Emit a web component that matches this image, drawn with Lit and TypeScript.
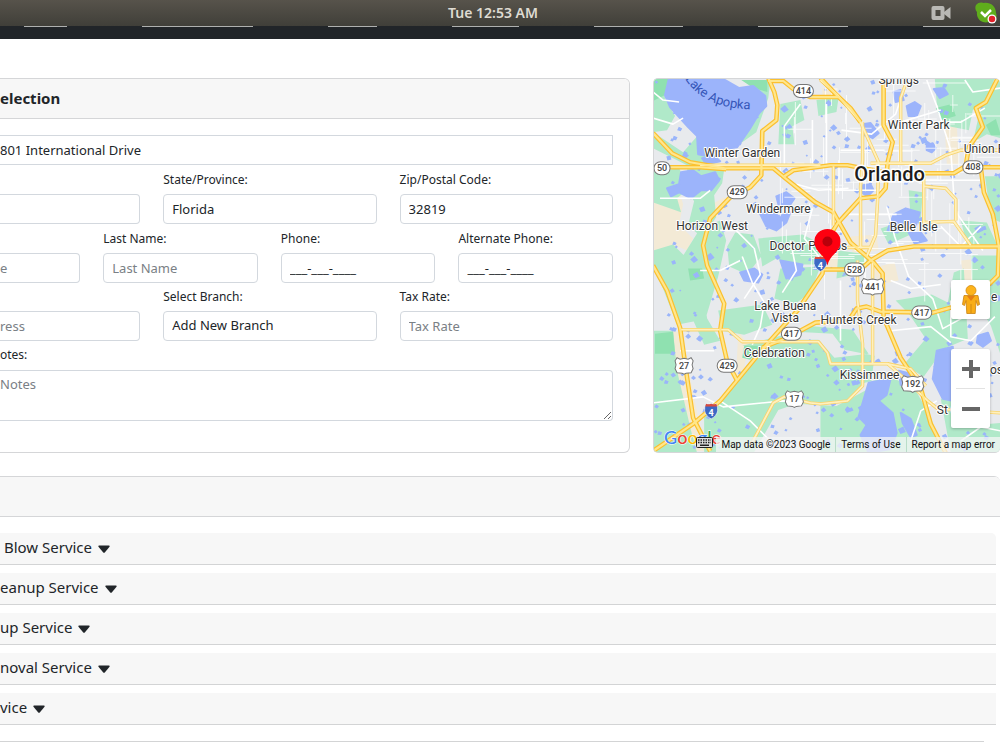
import { LitElement, html, svg, css } from "lit";
import { customElement, property } from "lit/decorators.js";

type Road = { d: string; major?: boolean };

const GREEN = [
  "M653 78h22l-10 20 10 18-8 14-14 2z",
  "M653 132l30 20 14-16 4 18 20 0-10 14-22 -2-36-18z",
  "M752 80h18l-2 18 -12 34-14 10-14 6 20-34z",
  "M780 104l20-4 4 20-12 6 2 18-16 0z",
  "M816 100l22-2-2 14-18 4z",
  "M688 165l36 4-2 14-8 12 2 22-14 20-14-12 6-24-10-16z",
  "M653 172l26-4 10 20-12 10 4 14-28-10z",
  "M700 228l20-8 6 20-8 36-12 40 14 24-16 4-18-40-6-44z",
  "M653 250l20-6 14 14 12 0 8 60-30 6-14-36-10-20z",
  "M735 232l18 2 8 22-14 18-18 -8-2-20z",
  "M758 238l44-4 20 10-8 20-24 0-14-6-14 8z",
  "M780 268l40-2-10 26-16 12-20-6z",
  "M653 330l20 0 4 40 14 60 6 22-44 0z",
  "M718 310l44-6 10 20-28 10-22-4z",
  "M742 345l22 2-44 54-16 8 0 42 50 0 24-42 18 -6 40 2 34-18 4-32-30-6-12-16-36-2z",
  "M806 325l46 4 16 24-34 4-16-18-22 0z",
  "M820 404l26-4 18-18 26-6 24 12 16 28 12 36-122 0z",
  "M895 300l36-6 16 8 6-30 10-4 4 70-24 10-20 28-20-12 22-26-16-24z",
  "M940 398l12 0 0 28 48-4 0 30-50 0z",
  "M934 78l60 0-10 24-12 8-4 20-20 -4-12-22z",
  "M984 88l16-10 0 60-14-4-14 8z",
  "M984 176l16 0 0 46-10-4z",
  "M960 220l26 2 10 22-30 0z",
  "M970 255l30 0 0 100-10-30-18-30z",
  "M838 250l30 4-6 18-26 6z",
  "M880 228l24-8 6 14-22 10z",
  "M908 190l14 2 -2 28-10-2z",
];
const DARK_GREEN = [
  "M653 79h16l-4 16-12 6z",
  "M741 80h26l0 12-14-4z",
  "M655 333l18-2 2 22-20 0z",
  "M688 268l14 0 2 10-14 2z",
  "M744 345l18 0-12 14-8-2z",
  "M935 108l16-4 4 12-14 4z",
  "M985 125l10-6 5 16-10 0z",
  "M812 242l8-2 2 10-10 2z",
];
const SAND = [
  "M653 170l22 6 8 28-4 20 14 14-6 12-14-6-12 12-8 0z",
  "M673 330l8 2 12 60 12 58-10 0-18-60z",
  "M710 205l14-8 4 10-14 10z",
  "M738 330l10 14-6 36-6-6z",
  "M850 236l26-2 2 16-26 2z",
  "M822 252l18-2 8 20-24 2z",
  "M944 128l12-4 2 40-12 0z",
  "M870 268l24-6 4 18-18 4z",
  "M822 88l14 0-2 8-12 0z",
  "M960 260l20-2 4 22-20 4z",
];
const WATER = [
  "M669 78L665 95l5 12 9 10 9 10 9 9 1 18 10 2 14-7 15-2 13-19 9-15 7-7-1-10-12-10-14 2-14-8z",
  "M681 172l12-2 8 6 14-4 4 8-8 10-10 0-10 8-12-6-8 4-4-8 12-4z",
  "M702 158l12-2 6 5-14 3z",
  "M760 214l10-4 8 6 12-4-4 10-10 8-10-4z",
  "M776 196l10-4 8 6-4 6-12 0z",
  "M740 272l14-4 8 6-4 8-14-2z",
  "M868 382l22-4-4 16-8 6 14 12 4 20-6 16-22 4-8-18 6-10-8-8z",
  "M936 350l16-4 0 54-10-2-10-20z",
  "M977 335l10-3 3 8-8 6-6-4z",
  "M862 185l8-1 3 6-6 6-6-4z",
  "M893 214l12-6 14 4-4 14-10-2-8 8-10-2z",
  "M862 124l8-1 8 10-6 5-8-4z",
  "M906 106l8-4 6 4-4 10-8 0z",
  "M933 89l10-1 4 6-8 4z",
  "M893 92l7-2 3 10-8 2z",
  "M908 232l12 0 6 8-12 3z",
  "M926 145l6-2 3 5-4 4-5-2z",
  "M780 260l22 4-2 10-14 4z",
  "M898 370l16 4-2 14-12-4z",
  "M900 412l10 6 6 16-6 2-8-14z",
];

const WHITE_STREETS = [
  "M653 92l10 8 16 2",
  "M653 118l20 6 10-6",
  "M660 198h40l10-8",
  "M720 230l16 0 18 18 6 26-16 24",
  "M742 256l10 26 12 20-4 24-8 18",
  "M790 240l6 30-14 22",
  "M812 208l-8 30 16 20",
  "M796 184l22 6 30-2",
  "M830 190h54M846 214h50M886 206l8 30 14 40 24 22 10 30 22-12",
  "M926 80l10 26 14 44 4 60 28 40",
  "M905 84l-10 30-24 20-30-4",
  "M900 122h60l24-14",
  "M840 150h44M900 180h80M940 226l20 20 20-20",
  "M950 300l0 36 20 4 24-24",
  "M653 402l50-6 20 10 60-6 30 2",
  "M720 400l30 20 30 30",
  "M840 280v60M890 280l20 8 30-4",
  "M890 330l40-4 20 16",
  "M680 350h34M700 270h20l20-10",
  "M940 110l-40 12M964 80l8 12 28-4",
  "M800 104l-16 22 0 38M812 120v46M826 104v60",
  "M910 440l10-30 16-10M960 440l20-14 20 4",
];

const ROADS: Road[] = [
  { d: "M700 165H820" },
  { d: "M820 80L837 95L860 122L878 162L877 200L875 235L866 256" },
  { d: "M905 84L900 98V162" },
  { d: "M870 163H930L945 155L960 150H1000" },
  { d: "M923 175V222L953 221L970 245" },
  { d: "M923 186L945 188L955 199V220" },
  { d: "M833 166V225" },
  { d: "M862 122V160L860 186V248" },
  { d: "M820 247H870" },
  { d: "M872 262V363" },
  { d: "M857 260V300L862 343V385L847 400L820 403L810 402L784 396L773 402L750 445" },
  { d: "M680 329H728L742 341H818L827 352L830 363H887L903 377L927 400L937 408L1000 412" },
  { d: "M887 363L910 368L925 385" },
  { d: "M768 78L774 92L777 105L776 120L762 131L761 175L750 187L730 197L710 218L703 245L707 265L724 303L720 330L727 361L737 380", major: true },
  { d: "M768 81H783L793 89L810 97H838", major: true },
  { d: "M820 78L837 96L850 108L860 122", major: true },
  { d: "M653 133L672 153L690 162L725 168L773 168L785 178L815 202L833 212L850 242L873 262L882 273L883 317L900 357L920 387L930 423L945 452", major: true },
  { d: "M653 167H700L726 169", major: true },
  { d: "M784 176L793 170L830 165H847L862 168L890 173H953L963 167H1000", major: true },
  { d: "M883 78V125L892 142L887 162L885 188L878 196L860 198L837 223L824 244L822 273L797 310L767 343L720 400L693 423L653 450", major: true },
  { d: "M997 78L985 102L975 108L982 127L968 147L965 165", major: true },
  { d: "M980 168L983 192L992 214L998 246L997 275L988 284", major: true },
  { d: "M822 269H860L870 260L887 250L913 246H1000", major: true },
  { d: "M653 265L667 290L680 327L687 377L693 417L710 450", major: true },
  { d: "M762 347L782 339L800 330L815 322L848 320L856 308L866 306L880 311L932 312L950 307L985 298", major: true },
];

/* Small deterministic generator so that the ponds keep their places between renders. */
function series(seed: number) {
  let s = seed;
  return () => ((s = (s * 16807) % 2147483647), s / 2147483647);
}
const rnd = series(4271);
const PONDS = Array.from({ length: 430 }, () => {
  const x = 653 + rnd() * 347;
  const y = 80 + rnd() * 368;
  const a = 1 + rnd() * rnd() * 5;
  const b = 1 + rnd() * 3;
  return `M${x.toFixed(1)} ${y.toFixed(1)}l${a.toFixed(1)} ${(-b).toFixed(1)}l${b.toFixed(1)} ${a.toFixed(1)}l${(-a).toFixed(1)} ${(b * 0.8).toFixed(1)}z`;
}).join("");
const BLOCKS = Array.from({ length: 130 }, () => {
  const x = Math.round(780 + rnd() * 200);
  const y = Math.round(82 + rnd() * 190);
  const l = Math.round(8 + rnd() * 36);
  return rnd() > 0.5 ? `M${x} ${y}h${l}` : `M${x} ${y}v${l}`;
}).join("");

const PLACES: [string, number, number][] = [
  ["Springs", 898, 84], ["Winter Park", 918, 129], ["Winter Garden", 742, 157],
  ["Windermere", 778, 213], ["Horizon West", 712, 230],
  ["Belle Isle", 913, 231], ["Doctor Phillips", 808, 250], ["Lake Buena", 785, 309], ["Vista", 785, 321],
  ["Hunters Creek", 858, 323], ["Celebration", 774, 356], ["Kissimmee", 869, 378],
];
const SHIELDS: [string, number, number, boolean][] = [
  ["414", 803, 91, false], ["50", 662, 168, false], ["429", 737, 192, false], ["408", 972, 167, false],
  ["528", 854, 269, false], ["417", 921, 312, false], ["417", 791, 333, false], ["429", 727, 365, false],
  ["441", 872, 286, true], ["27", 684, 365, true], ["17", 794, 398, true], ["192", 912, 383, true],
];

@customElement("map-panel")
export class MapPanel extends LitElement {
  static styles = css`
    :host { display: block; position: relative; overflow: hidden; border: 1px solid #d5d6d8; border-right: 0; border-radius: 5px; box-sizing: border-box; background: #e8eaed; font-family: Roboto, sans-serif; }
    .map { display: block; width: 100%; height: 0; min-height: 100%; }
    .place { font: 12px Roboto, sans-serif; fill: #333; stroke: #fff; stroke-width: 2px; paint-order: stroke; stroke-linejoin: round; }
    .city { font-size: 20px; font-weight: 500; fill: #1c1c1c; stroke-width: 3px; }
    .lake { font: 13px Roboto, sans-serif; fill: #3556b8; }
    .num { font: 500 9px Roboto, sans-serif; fill: #444; }
    .inum { font: bold 9px Roboto, sans-serif; fill: #fff; }
    .logo { font: 500 18px Lato, sans-serif; stroke: #fff; stroke-width: 1px; paint-order: stroke; }
    .controls { position: absolute; right: 10px; bottom: 24px; display: grid; gap: 30px; }
    .box { background: #fff; border-radius: 2px; box-shadow: 0 1px 3px rgba(0, 0, 0, 0.25); display: grid; width: 39px; }
    button { border: 0; background: none; padding: 0; height: 39px; display: grid; place-items: center; cursor: pointer; }
    .rule { height: 1px; margin: 0 5px; background: #e2e2e2; }
    .legal { position: absolute; right: 0; bottom: 0; display: flex; align-items: center; font-size: 10px; line-height: 15px; color: #111; }
    .legal > * { padding: 0 5px; background: rgba(245, 245, 245, 0.75); color: inherit; text-decoration: none; white-space: nowrap; height: 15px; }
    .legal > * + * { border-left: 1px solid #b9ddc8; }
    .legal > .keys { padding: 0 3px; background: none; }
    .legal > .data { border: 0; }
  `;

  render() {
    return html`
      <svg class="map" viewBox="654 79 346 372" preserveAspectRatio="xMinYMin slice" role="img" aria-label="Map">
        <rect x="600" y="60" width="800" height="420" fill="#e8eaed"></rect>
        <path d=${SAND.join("")} fill="#f3ead6"></path>
        <path d=${GREEN.join("")} fill="#b0e9c9"></path>
        <path d=${DARK_GREEN.join("")} fill="#8fe1b0"></path>
        <path d=${PONDS} fill="#9ab5fa"></path>
        <path d=${WATER.join("")} fill="#9cb4fb" stroke="#9cb4fb" stroke-width="2" stroke-linejoin="round"></path>
        <path d=${BLOCKS} fill="none" stroke="#fff" stroke-width="1" opacity=".75"></path>
        <path d=${WHITE_STREETS.join("")} fill="none" stroke="#fff" stroke-width="1.6" stroke-linejoin="round"></path>
        <g fill="none" stroke-linejoin="round">
          ${ROADS.map((r) => svg`<path d=${r.d} stroke=${r.major ? "#fbc02f" : "#f8d36b"} stroke-width=${r.major ? 4.6 : 3.4}></path>`)}
          ${ROADS.map((r) => svg`<path d=${r.d} stroke=${r.major ? "#ffe68c" : "#fff0bd"} stroke-width=${r.major ? 2.2 : 1.8}></path>`)}
        </g>
        <path id="lake-line" d="M685 79Q706 111 758 109" fill="none"></path>
        <text class="lake"><textPath href="#lake-line">Lake Apopka</textPath></text>
        <g text-anchor="middle">
          ${PLACES.map(([t, x, y]) => svg`<text class="place" x=${x} y=${y}>${t}</text>`)}
          <text class="place city" x="889" y="181">Orlando</text>
        </g>
        <text class="place" x="963" y="153">Union Park</text>
        <text class="place" x="936" y="413">St Cloud</text>
        <text class="place" x="990" y="300">e</text>
        <text class="place" x="989" y="373">os</text>
        <g text-anchor="middle">
          ${SHIELDS.map(([t, x, y, us]) => svg`
            ${us
              ? svg`<path transform="translate(${x} ${y})" d=${t.length > 2
                  ? "M-9-8l4 1.500 5-1 5 1 4-1.500 2 3-1 4 1 4-2 4-7 .500-2 1-2-1-7-.500-2-4 1-4-1-4z"
                  : "M-7-8l3 1.500 4-1 4 1 3-1.500 2 3-1 4 1 4-2 4-5 .500-2 1-2-1-5-.500-2-4 1-4-1-4z"} fill="#fff" stroke="#777"></path>`
              : svg`<rect x=${x - (t.length > 2 ? 10 : 8)} y=${y - 6.5} width=${t.length > 2 ? 20 : 16} height="13" rx="6.500" fill="#fff" stroke="#777"></rect>`}
            <text class="num" x=${x} y=${y + 3}>${t}</text>`)}
          ${[[820, 263], [711, 410]].map(([x, y]) => svg`
            <g transform="translate(${x} ${y})">
              <path d="M-5-7q2 1 5 0 3 1 5 0 2 3 1.500 7-1 5-6.500 8-5.500-3-6.500-8-.500-4 1.500-7z" fill="#3d68c4" stroke="#fff" stroke-width=".6"></path>
              <path d="M-6-4.500L-5-7q2 1 5 0 3 1 5 0l1 2.500z" fill="#d94b3f"></path>
              <text class="inum" y="5">4</text>
            </g>`)}
        </g>
        <path d="M827 265C825 254 814 252 814 241a13 12.500 0 0 1 26 0C840 252 829 254 827 265z" fill="#fe0010"></path>
        <circle cx="827" cy="241" r="5" fill="#b8000b"></circle>
        <text class="logo" x="664" y="443"><tspan fill="#4285f4">G</tspan><tspan fill="#ea4335">o</tspan><tspan fill="#fbbc05">o</tspan><tspan fill="#4285f4">g</tspan><tspan fill="#34a853">l</tspan><tspan fill="#ea4335">e</tspan></text>
      </svg>
      <div class="controls">
        <div class="box">
          <button aria-label="Street View">
            <svg width="20" height="32" viewBox="0 0 20 32">
              <path d="M3 11.500h14l1.500 9-2 1-1.500-5-.800 13H5.800L5 16.500l-1.500 5-2-1z" fill="#f9ad17" stroke="#c98212" stroke-width=".8"></path>
              <path d="M6 12h8l-4 5z" fill="#e57d12"></path>
              <circle cx="10" cy="6.500" r="5" fill="#fdb31b" stroke="#d08a14" stroke-width=".8"></circle>
              <path d="M10 20v9" stroke="#d08a14"></path>
            </svg>
          </button>
        </div>
        <div class="box">
          <button aria-label="Zoom in"><svg width="18" height="18"><path d="M9 0v18M0 9h18" stroke="#666" stroke-width="4"></path></svg></button>
          <div class="rule"></div>
          <button aria-label="Zoom out"><svg width="18" height="18"><path d="M0 9h18" stroke="#666" stroke-width="4"></path></svg></button>
        </div>
      </div>
      <div class="legal">
        <span class="keys"><svg width="17" height="11" viewBox="0 0 17 11"><rect x=".5" y=".5" width="16" height="10" rx="1" fill="#ddd" stroke="#222"></rect><path d="M2 3h13M2 5.500h13" stroke="#222" stroke-width="1.500" stroke-dasharray="1.500 1"></path><path d="M4 8.200h9" stroke="#222" stroke-width="1.500"></path></svg></span>
        <span class="data">Map data ©2023 Google</span>
        <a href="#terms">Terms of Use</a>
        <a href="#report">Report a map error</a>
      </div>
    `;
  }
}

@customElement("service-row")
export class ServiceRow extends LitElement {
  @property() name = "";
  static styles = css`
    :host { display: block; }
    button { display: flex; align-items: center; gap: 6px; width: 100%; height: 32px; padding: 0 0 3px; box-sizing: border-box; border: 0; border-bottom: 1px solid #d3d4d5; background: #f7f7f7; color: #212529; font: 15px "Noto Sans", sans-serif; text-align: left; white-space: pre; border-radius: inherit; cursor: pointer; }
    svg { margin-top: 4px; }
  `;
  render() {
    return html`<button aria-expanded="false">${this.name}<svg width="12" height="8" viewBox="0 0 12 8"><path d="M1 .5h10q1 .3.500 1.300L7 7.200q-1 1-2 0L.5 1.800Q0 .8 1 .5z" fill="#212529"></path></svg></button>`;
  }
}

@customElement("app-root")
export class AppRoot extends LitElement {
  static styles = css`
    :host { display: block; min-height: 100vh; overflow: hidden; background: #fff; color: #212529; font: 13px "Noto Sans", sans-serif; }
    .system { display: grid; grid-template-columns: 1fr auto 1fr; align-items: center; height: 26px; background: linear-gradient(#57534b, #403f39); color: #dfdbd2; }
    .clock { grid-column: 2; font-size: 14px; line-height: 20px; font-weight: 600; padding-right: 14px; }
    .tray { display: flex; justify-content: flex-end; align-items: center; gap: 24px; padding-right: 3px; }
    .nav { display: flex; gap: 75px; height: 13px; padding-left: 24px; background: #212529; }
    .line { flex: none; height: 1px; background: #aeb0af; }
    .top { display: grid; grid-template-columns: 630fr 347fr; gap: 23px; margin-top: 39px; }
    .card { border: 1px solid #d5d6d8; border-left: 0; border-radius: 0 6px 6px 0; box-sizing: border-box; }
    .head { box-sizing: border-box; height: 40px; margin: 0; border-bottom: 1px solid #d5d6d8; background: #f7f7f7; border-radius: 0 5px 0 0; font-size: 15px; line-height: 39px; font-weight: 700; }
    .form { padding: 16px 16px 31px 0; }
    .row { display: grid; column-gap: 23px; align-items: end; }
    .three { grid-template-columns: 140fr 213fr 213fr; }
    .four { grid-template-columns: 80fr 154fr 154fr 154fr; }
    label { display: block; height: 29px; line-height: 29px; font-size: 12px; white-space: nowrap; }
    .three ~ .three label, .four ~ label { height: 28px; line-height: 28px; }
    .four ~ label { height: 29px; }
    input, select, textarea { display: block; width: 100%; height: 30px; box-sizing: border-box; margin: 0; padding: 0 8px; border: 1px solid #d3d8de; border-radius: 4px; background: #fff; color: #212529; font: 13px "Noto Sans", sans-serif; appearance: none; outline: 0; }
    select { padding-bottom: 2px; }
    .cut { border-left: 0; border-radius: 0 4px 4px 0; padding-left: 0; }
    .wide { border-radius: 0; }
    textarea { height: 51px; padding-top: 4px; resize: vertical; }
    ::placeholder { color: #7a8085; opacity: 1; }
    .services { margin-top: 23px; border-bottom: 0; border-right: 0; }
    .list { display: grid; gap: 8px; padding: 16px 4px 16px 0; }
    .first { border-radius: 0 5px 0 0; }
    hr { height: 1px; margin: 0 16px 0 0; border: 0; background: #d3d4d5; }
  `;

  render() {
    return html`
      <header>
        <div class="system">
          <time class="clock">Tue 12:53 AM</time>
          <div class="tray">
            <svg width="20" height="14" viewBox="0 0 20 14"><path d="M2.500 2h9v10h-9z" fill="none" stroke="#b9b8b4" stroke-width="4" stroke-linejoin="round"></path><path d="M13 6l6.500-5v12L13 8z" fill="#b9b8b4"></path></svg>
            <svg width="22" height="22" viewBox="0 0 22 22"><path d="M1 3C3 0 7 0 9 1c6-1 12 3 12 10 2 5-2 10-7 9C7 22 1 17 2 10 0 8 0 5 1 3z" fill="#5fad1c"></path><path d="M6 10l4 4 6-6" fill="none" stroke="#fff" stroke-width="2.500"></path><circle cx="17" cy="17" r="4.500" fill="#fff"></circle><circle cx="17" cy="17" r="3.200" fill="#e3222b"></circle></svg>
          </div>
        </div>
        <div class="nav">
          ${[43, 111, 49, 67, 89, 90, 77].map((w) => html`<span class="line" style="width:${w}px"></span>`)}
        </div>
      </header>
      <main>
        <div class="top">
          <section class="card">
            <h2 class="head">election</h2>
            <form class="form">
              <input class="cut wide" aria-label="Address" value="801 International Drive">
              <div class="row three">
                <div><input class="cut" aria-label="City"></div>
                <div><label for="state">State/Province:</label><input id="state" value="Florida"></div>
                <div><label for="zip">Zip/Postal Code:</label><input id="zip" value="32819"></div>
              </div>
              <div class="row four">
                <div><input class="cut" aria-label="First name" placeholder="e"></div>
                <div><label for="last">Last Name:</label><input id="last" placeholder="Last Name"></div>
                <div><label for="phone">Phone:</label><input id="phone" type="tel" value="___-___-____"></div>
                <div><label for="alt">Alternate Phone:</label><input id="alt" type="tel" value="___-___-____"></div>
              </div>
              <div class="row three">
                <div><input class="cut" aria-label="Email address" placeholder="ress"></div>
                <div><label for="branch">Select Branch:</label><select id="branch"><option>Add New Branch</option></select></div>
                <div><label for="tax">Tax Rate:</label><input id="tax" placeholder="Tax Rate"></div>
              </div>
              <label for="notes">otes:</label>
              <textarea class="cut" id="notes" placeholder="Notes"></textarea>
            </form>
          </section>
          <map-panel></map-panel>
        </div>
        <section class="card services">
          <div class="head"></div>
          <div class="list">
            <service-row class="first" name=" Blow Service"></service-row>
            <service-row name="eanup Service"></service-row>
            <service-row name="up Service"></service-row>
            <service-row name="noval Service"></service-row>
            <service-row name="vice"></service-row>
          </div>
          <hr>
        </section>
      </main>
    `;
  }
}
